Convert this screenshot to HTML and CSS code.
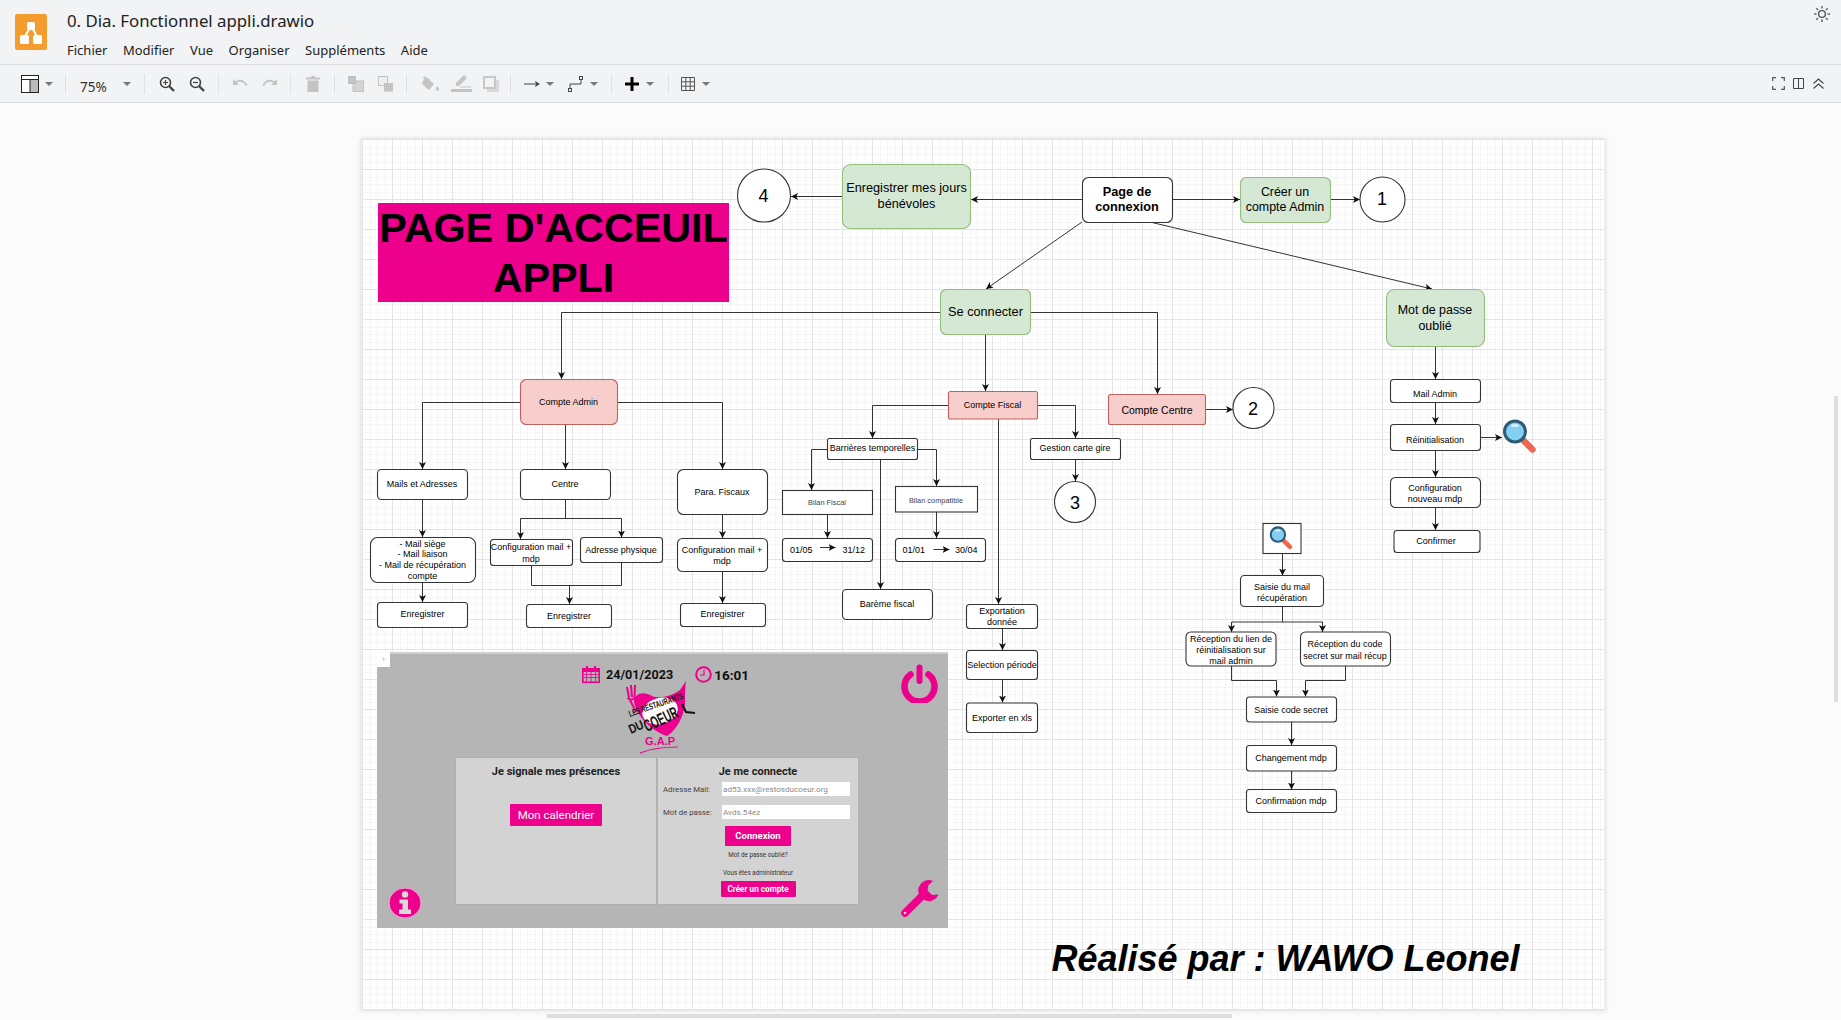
FILE: index.html
```html
<!DOCTYPE html>
<html lang="fr">
<head>
<meta charset="utf-8">
<title>0. Dia. Fonctionnel appli.drawio</title>
<link rel="stylesheet" href="styles.css">
</head>
<body>
<header class="header">
  <svg class="app-logo" viewBox="0 0 32 36"><rect width="32" height="36" rx="2" fill="#f49d2e"/><path d="M16 12 9 24M16 12l7 12" stroke="#fff" stroke-width="2"/><rect x="12" y="8" width="8" height="8" rx="1.5" fill="#fff"/><rect x="5" y="21" width="9" height="9" rx="1.5" fill="#fff"/><rect x="18" y="21" width="9" height="9" rx="1.5" fill="#fff"/></svg>
  <div class="title-block">
    <div class="doc-title">0. Dia. Fonctionnel appli.drawio</div>
    <nav class="menu"><span>Fichier</span><span>Modifier</span><span>Vue</span><span>Organiser</span><span>Suppléments</span><span>Aide</span></nav>
  </div>
  <svg class="sun" viewBox="0 0 18 18"><circle cx="9" cy="9" r="3.4" fill="none" stroke="#555" stroke-width="1.4"/><path d="M9 1v2.4M9 14.6V17M1 9h2.4M14.6 9H17M3.3 3.3 5 5M13 13l1.7 1.7M3.3 14.7 5 13M13 5l1.7-1.7" stroke="#666" stroke-width="1.5"/></svg>
</header>

<div class="toolbar">
  <span class="tool w26"><svg width="18" height="18" viewBox="0 0 18 18"><rect x=".5" y=".5" width="17" height="17" fill="#fff" stroke="#222"/><rect x="9" y="5" width="8" height="12" fill="#bbb"/><path d="M1 4.5h16M9 5v12" stroke="#222" fill="none"/></svg></span>
  <span class="caret"></span>
  <span class="sep ml-10"></span>
  <span class="zoom-val ml-14">75%</span>
  <span class="caret ml-15"></span>
  <span class="sep ml-11"></span>
  <span class="tool w30 ml-7"><svg width="16" height="16" viewBox="0 0 16 16"><circle cx="6.5" cy="6.5" r="5" fill="none" stroke="#444" stroke-width="1.6"/><path d="M10 10l5 5" stroke="#444" stroke-width="2.4"/><path d="M4 6.5h5M6.5 4v5" stroke="#444" stroke-width="1.2"/></svg></span>
  <span class="tool w30"><svg width="16" height="16" viewBox="0 0 16 16"><circle cx="6.5" cy="6.5" r="5" fill="none" stroke="#444" stroke-width="1.6"/><path d="M10 10l5 5" stroke="#444" stroke-width="2.4"/><path d="M4 6.5h5" stroke="#444" stroke-width="1.2"/></svg></span>
  <span class="sep ml-6"></span>
  <span class="tool w30 ml-6"><svg width="16" height="10" viewBox="0 0 16 10"><path d="M1 0v6h6L4.6 3.8C7.500 1.800 11.800 2.500 14 7l1.500-.8C13 .5 7.500-.8 3.300 2.300Z" fill="#c4c4c4"/></svg></span>
  <span class="tool w30"><svg width="16" height="10" viewBox="0 0 16 10"><path d="M15 0v6H9l2.400-2.200C8.500 1.800 4.200 2.500 2 7L.5 6.200C3 .5 8.500-.8 12.700 2.300Z" fill="#c4c4c4"/></svg></span>
  <span class="sep ml-5"></span>
  <span class="tool w30 ml-7"><svg width="14" height="16" viewBox="0 0 14 16"><path d="M0 1.500h14V3.500H0ZM5 0h4v2H5ZM1.500 4.500h11V16h-11Z" fill="#c4c4c4"/></svg></span>
  <span class="sep ml-6"></span>
  <span class="tool w30 ml-6"><svg width="16" height="16" viewBox="0 0 16 16"><rect x="5" y="5" width="10.500" height="10.500" fill="#d4d4d4" stroke="#c4c4c4"/><rect x=".5" y=".5" width="7" height="7" fill="#c4c4c4" stroke="#bbb"/></svg></span>
  <span class="tool w30"><svg width="16" height="16" viewBox="0 0 16 16"><rect x=".5" y=".5" width="9" height="9" fill="#eee" stroke="#c4c4c4"/><rect x="6" y="7" width="9" height="8.500" fill="#c4c4c4"/></svg></span>
  <span class="sep ml-5"></span>
  <span class="tool w30 ml-9"><svg width="18" height="16" viewBox="0 0 18 16"><path d="M3 0 12 8 7 14 0 8Z M2 7h10" fill="#c4c4c4"/><path d="M1 1l7 3" stroke="#c4c4c4" fill="none"/><path d="M15.500 10c1.500 2 2 3 1.500 4-.6 1-2.400 1-3 0-.5-1 0-2 1.500-4Z" fill="#c4c4c4"/></svg></span>
  <span class="tool w30"><svg width="21" height="17" viewBox="0 0 21 17"><path d="M13 0l3 3-8 8H5V8Z" fill="#c4c4c4"/><rect y="14" width="21" height="3" fill="#c4c4c4"/><path d="M9 12h11" stroke="#c4c4c4"/></svg></span>
  <span class="tool w30"><svg width="16" height="16" viewBox="0 0 16 16"><rect x="4" y="4" width="12" height="12" fill="#dadada"/><rect x="1" y="1" width="11" height="11" fill="#f1f3f4" stroke="#c4c4c4" stroke-width="1.800"/></svg></span>
  <span class="sep ml-4"></span>
  <span class="tool w24 ml-9"><svg width="16" height="8" viewBox="0 0 16 8"><path d="M0 4h13" stroke="#444"/><path d="M11 1l5 3-5 3 1-3Z" fill="#444"/></svg></span>
  <span class="caret"></span>
  <span class="tool w24 ml-8"><svg width="16" height="16" viewBox="0 0 16 16"><path d="M2 13V8h11V3" fill="none" stroke="#444"/><rect x=".5" y="12.500" width="3" height="3" fill="#f1f3f4" stroke="#444"/><rect x="11.500" y=".5" width="3" height="3" fill="#f1f3f4" stroke="#444"/></svg></span>
  <span class="caret"></span>
  <span class="sep ml-11"></span>
  <span class="tool w24 ml-8"><svg width="14" height="14" viewBox="0 0 14 14"><path d="M5.500 0h3v5.500H14v3H8.500V14h-3V8.500H0v-3h5.500Z" fill="#000"/></svg></span>
  <span class="caret"></span>
  <span class="sep ml-12"></span>
  <span class="tool w24 ml-7"><svg width="14" height="14" viewBox="0 0 14 14"><path d="M.5.500h13v13H.500ZM.500 4.800h13M.500 9.200h13M4.800.5v13M9.200.5v13" fill="none" stroke="#555"/></svg></span>
  <span class="caret"></span>
  <span class="tb-right">
    <span class="tool w20"><svg width="13" height="13" viewBox="0 0 13 13"><path d="M.7 4V.7H4M9 .7h3.300V4M12.300 9v3.300H9M4 12.300H.7V9" fill="none" stroke="#555" stroke-width="1.200"/></svg></span>
    <span class="tool w20"><svg width="11" height="11" viewBox="0 0 11 11"><path d="M.5.500h10v10H.500ZM5.500.5v10" fill="none" stroke="#444"/></svg></span>
    <span class="tool w20"><svg width="11" height="11" viewBox="0 0 11 11"><path d="M.5 5.500 5.500 1l5 4.500M.5 10.500l5-4.500 5 4.500" fill="none" stroke="#444" stroke-width="1.100"/></svg></span>
  </span>
</div>

<main class="canvas">
  <svg class="diagram" viewBox="0 103 1841 917" width="1841" height="917">
    <defs>
      <pattern id="grid" x="362" y="139" width="30" height="30" patternUnits="userSpaceOnUse">
        <path class="minor" d="M8 0v30M15 0v30M23 0v30M0 8h30M0 15h30M0 23h30"/>
        <path class="major" d="M.5 0v30M0 .5h30"/>
      </pattern>
      <marker id="a" markerUnits="userSpaceOnUse" markerWidth="8" markerHeight="8" refX="7" refY="4" orient="auto">
        <path d="M0 .5 7 4 0 7.500 1.700 4Z" fill="#111"/>
      </marker>
      <symbol id="mag" viewBox="0 0 35 35">
        <path d="M21 21 30.500 30.500" stroke="#f0674f" stroke-width="6.500" stroke-linecap="round"/>
        <circle cx="13" cy="12.500" r="10.500" fill="#83d0f2" stroke="#2e5a75" stroke-width="3"/>
        <ellipse cx="13" cy="6.500" rx="4" ry="1.500" fill="#d6f1fb"/>
      </symbol>
    </defs>

    <rect class="paper" x="361" y="139" width="1244" height="871"/>
    <rect x="362" y="139" width="1242" height="871" fill="url(#grid)"/>

    <rect class="banner" x="378" y="203" width="351" height="99"/>
    <text class="t-banner" x="553.500" y="242">PAGE D'ACCEUIL</text>
    <text class="t-banner" x="553.500" y="292">APPLI</text>

    <g class="edges" marker-end="url(#a)">
      <path d="M1082 199.500H971"/>
      <path d="M842 196.500H791"/>
      <path d="M1173 199.500H1240"/>
      <path d="M1330 199.500H1360"/>
      <path d="M1082 222 986 289"/>
      <path d="M1150 222 1432 289"/>
      <path d="M940 312.500H561.500V379"/>
      <path d="M985.500 335V391"/>
      <path d="M1030 312.500H1157.500V394"/>
      <path d="M1206 409.500H1233"/>
      <path d="M520 402.500H422.500V469"/>
      <path d="M618 402.500H722.500V469"/>
      <path d="M565.500 425V469"/>
      <path d="M948 405.500H872.500V438"/>
      <path d="M1038 405.500H1075.500V438"/>
      <path d="M1075.500 459V481"/>
      <path d="M827 449.500H811.500V490"/>
      <path d="M918 449.500H936.500V486"/>
      <path d="M880.500 459V589"/>
      <path d="M998.500 419V604"/>
      <path d="M827.500 515V538"/>
      <path d="M936.500 512V538"/>
      <path d="M422.500 500V537"/>
      <path d="M422.500 582V602"/>
      <path d="M565.500 500V518.500H520.500V539"/>
      <path d="M565.500 518.500H621.500V537.500"/>
      <path d="M569.500 585V604"/>
      <path d="M722.500 515V538"/>
      <path d="M722.500 571V603"/>
      <path d="M1002.500 628V650"/>
      <path d="M1002.500 680V702.500"/>
      <path d="M1435.500 347V379"/>
      <path d="M1435.500 403V424"/>
      <path d="M1435.500 450V477"/>
      <path d="M1435.500 507V530"/>
      <path d="M1480 437.500H1502"/>
      <path d="M1282.500 553V575.500"/>
      <path d="M1282.500 622H1231.500V632"/>
      <path d="M1282.500 622H1322.500V632"/>
      <path d="M1231.500 666V680.500H1276.500V696.500"/>
      <path d="M1345.500 666V680.500H1305.500V696.500"/>
      <path d="M1291.500 722V745"/>
      <path d="M1291.500 771V789.500"/>
    </g>
    <path class="line" d="M531.500 566V585.500H621.500V562M1282.500 607V622"/>

    <rect class="green" x="842.500" y="164.500" width="128" height="64" rx="8"/>
    <text class="t13" x="906.500" y="192">Enregistrer mes jours</text>
    <text class="t13" x="906.500" y="208">bénévoles</text>

    <ellipse class="box" cx="764" cy="195.500" rx="26.500" ry="26.500"/>
    <text class="t18" x="763.500" y="202">4</text>

    <rect class="box" x="1082.500" y="177.500" width="90" height="45" rx="6"/>
    <text class="t13 bold" x="1127" y="196">Page de</text>
    <text class="t13 bold" x="1127" y="211">connexion</text>

    <rect class="green" x="1240.500" y="177.500" width="90" height="45" rx="6"/>
    <text class="t12-5" x="1285" y="196">Créer un</text>
    <text class="t12-5" x="1285" y="211">compte Admin</text>

    <ellipse class="box" cx="1382.500" cy="199.500" rx="22.500" ry="22.500"/>
    <text class="t18" x="1382" y="205">1</text>

    <rect class="green" x="940.500" y="289.500" width="90" height="45" rx="6"/>
    <text class="t13" x="985.500" y="316">Se connecter</text>

    <rect class="green" x="1386.500" y="289.500" width="98" height="57" rx="8"/>
    <text class="t12-5" x="1435" y="314">Mot de passe</text>
    <text class="t12-5" x="1435" y="330">oublié</text>

    <rect class="red" x="520.500" y="379.500" width="97" height="45" rx="6"/>
    <text class="t9" x="568.500" y="405">Compte Admin</text>

    <rect class="red" x="948.500" y="391.500" width="89" height="27.500" rx="2"/>
    <text class="t9" x="992.500" y="408">Compte Fiscal</text>

    <rect class="red" x="1108.500" y="394.500" width="97" height="30" rx="2"/>
    <text class="t10-5" x="1157" y="413.500">Compte Centre</text>

    <ellipse class="box" cx="1253.500" cy="408" rx="20.500" ry="20.500"/>
    <text class="t18" x="1253" y="414.500">2</text>

    <rect class="box" x="827.500" y="438.500" width="90" height="21" rx="2"/>
    <text class="t9" x="872.500" y="451">Barrières temporelles</text>

    <rect class="box" x="1030.500" y="438.500" width="90" height="21" rx="2"/>
    <text class="t9" x="1075" y="451">Gestion carte gire</text>

    <ellipse class="box" cx="1075" cy="502" rx="20.500" ry="20.500"/>
    <text class="t18" x="1075" y="508.500">3</text>

    <rect class="box" x="1390.500" y="379.500" width="90" height="23" rx="3"/>
    <text class="t9" x="1435" y="397">Mail Admin</text>

    <rect class="box" x="1390.500" y="424.500" width="90" height="26" rx="3"/>
    <text class="t9" x="1435" y="443">Réinitialisation</text>
    <use href="#mag" x="1502" y="419" width="35" height="35"/>

    <rect class="box" x="1390.500" y="477.500" width="90" height="30" rx="5"/>
    <text class="t9" x="1435" y="490.500">Configuration</text>
    <text class="t9" x="1435" y="501.500">nouveau mdp</text>

    <rect class="box" x="1394" y="530.500" width="86" height="22" rx="3"/>
    <text class="t9" x="1436" y="544">Confirmer</text>

    <rect class="box" x="1263" y="523.500" width="38" height="30"/>
    <use href="#mag" x="1269" y="526" width="24" height="24"/>

    <rect class="box" x="1240.500" y="575.500" width="83" height="31" rx="4"/>
    <text class="t9" x="1282" y="589.500">Saisie du mail</text>
    <text class="t9" x="1282" y="600.500">récupération</text>

    <rect class="box" x="1186" y="632" width="90" height="34" rx="5"/>
    <text class="t9" x="1231" y="641.500">Réception du lien de</text>
    <text class="t9" x="1231" y="652.500">réinitialisation sur</text>
    <text class="t9" x="1231" y="663.500">mail admin</text>

    <rect class="box" x="1300.500" y="632" width="90" height="34" rx="5"/>
    <text class="t9" x="1345" y="646.500">Réception du code</text>
    <text class="t9" x="1345" y="658.500">secret sur mail récup</text>

    <rect class="box" x="1246.500" y="697" width="90" height="25" rx="3"/>
    <text class="t9" x="1291" y="712.500">Saisie code secret</text>

    <rect class="box" x="1246.500" y="745.500" width="90" height="25.500" rx="3"/>
    <text class="t9" x="1291" y="760.500">Changement mdp</text>

    <rect class="box" x="1246.500" y="789.500" width="90" height="23" rx="3"/>
    <text class="t9" x="1291" y="803.500">Confirmation mdp</text>

    <rect class="box" x="377.500" y="469.500" width="90" height="30" rx="4"/>
    <text class="t9" x="422" y="487">Mails et Adresses</text>

    <rect class="box" x="370.500" y="537.500" width="105" height="45" rx="7"/>
    <text class="t9" x="422.500" y="547">- Mail siège</text>
    <text class="t9" x="422.500" y="557">- Mail liaison</text>
    <text class="t9" x="422.500" y="568">- Mail de récupération</text>
    <text class="t9" x="422.500" y="579">compte</text>

    <rect class="box" x="377.500" y="602.500" width="90" height="25" rx="3"/>
    <text class="t9" x="422.500" y="617">Enregistrer</text>

    <rect class="box" x="520.500" y="469.500" width="90" height="30" rx="4"/>
    <text class="t9" x="565" y="487">Centre</text>

    <rect class="box" x="490.500" y="539.500" width="82" height="26" rx="3"/>
    <text class="t9" x="531" y="550">Configuration mail +</text>
    <text class="t9" x="531" y="562">mdp</text>

    <rect class="box" x="580.500" y="537.500" width="82" height="25" rx="3"/>
    <text class="t9" x="621" y="553">Adresse physique</text>

    <rect class="box" x="526.500" y="604.500" width="85" height="23" rx="3"/>
    <text class="t9" x="569" y="619">Enregistrer</text>

    <rect class="box" x="677.500" y="469.500" width="90" height="45" rx="6"/>
    <text class="t9" x="722" y="495">Para. Fiscaux</text>

    <rect class="box" x="677.500" y="538.500" width="90" height="33" rx="5"/>
    <text class="t9" x="722" y="553">Configuration mail +</text>
    <text class="t9" x="722" y="564">mdp</text>

    <rect class="box" x="680.500" y="603.500" width="85" height="23" rx="3"/>
    <text class="t9" x="722.500" y="617">Enregistrer</text>

    <rect class="box" x="782.500" y="490.500" width="90" height="24"/>
    <text class="t7 grey" x="827" y="505">Bilan Fiscal</text>

    <rect class="box" x="895.500" y="486.500" width="82" height="25.500"/>
    <text class="t7 grey" x="936" y="502.500">Bilan compatible</text>

    <rect class="box" x="782.500" y="538.500" width="90" height="23" rx="3"/>
    <text class="t9 left" x="790" y="553">01/05</text>
    <text class="t9 left" x="842.500" y="553">31/12</text>

    <rect class="box" x="895.500" y="538.500" width="90" height="23" rx="3"/>
    <text class="t9 left" x="902.500" y="553">01/01</text>
    <text class="t9 left" x="955" y="553">30/04</text>

    <g class="edges" marker-end="url(#a)">
      <path d="M820 547.500H835.500"/>
      <path d="M933.500 549.500H949.500"/>
    </g>

    <rect class="box" x="842.500" y="589.500" width="90" height="30" rx="4"/>
    <text class="t9" x="887" y="607">Barème fiscal</text>

    <rect class="box" x="966.500" y="604.500" width="71" height="24" rx="3"/>
    <text class="t9" x="1002" y="614">Exportation</text>
    <text class="t9" x="1002" y="625">donnée</text>

    <rect class="box" x="966.500" y="650.500" width="71" height="29" rx="3"/>
    <text class="t9" x="1002" y="668">Selection période</text>

    <rect class="box" x="966.500" y="703" width="71" height="29.500" rx="3"/>
    <text class="t9" x="1002" y="721">Exporter en xls</text>

    <text class="t-credit" x="1051.500" y="971">Réalisé par : WAWO Leonel</text>
  </svg>

  <section class="shot">
    <span class="shot-handle">›</span>
    <div class="shot-head">
      <svg width="18" height="17" viewBox="0 0 18 17"><rect x=".8" y="2.800" width="16.400" height="13.400" fill="none" stroke="#ec008c" stroke-width="1.600"/><path d="M1 8.500h16M1 11.500h16M4.500 6v10M9 6v10M13.500 6v10" stroke="#ec008c" stroke-width=".8"/><path d="M1 3h16v3H1ZM4 0h2v4H4ZM12 0h2v4h-2Z" fill="#ec008c"/></svg>
      <span class="shot-date">24/01/2023</span>
      <svg class="shot-clock" width="17" height="17" viewBox="0 0 17 17"><circle cx="8.500" cy="8.500" r="7.300" fill="none" stroke="#ec008c" stroke-width="2"/><path d="M9 4v5H5" fill="none" stroke="#ec008c" stroke-width="1.200"/></svg>
      <span class="shot-time">16:01</span>
    </div>
    <svg class="shot-logo" width="75" height="73" viewBox="5 3 75 73">
      <path d="M14 22C14 13 24 11 32 16 40 19 52 16 60 10L66 1C65 8 65 14 65 22 65 34 57 50 47 56 35 52 18 40 14 22Z" fill="#ec008c"/>
      <ellipse cx="40" cy="31" rx="18" ry="13" transform="rotate(-15 40 31)" fill="#fff"/>
      <path d="M7 7 9 18 16 32M11 5l1 12M15 5 14.500 18M7.500 18C10 20 13 20 14.500 18" fill="none" stroke="#ec008c" stroke-width="2"/>
      <text class="logo-a" transform="translate(10 37) rotate(-19)" textLength="57" lengthAdjust="spacingAndGlyphs">LES RESTAURANTS</text>
      <text class="logo-b" transform="translate(11 54) rotate(-24)" textLength="15" lengthAdjust="spacingAndGlyphs">DU</text>
      <text class="logo-d" transform="translate(27 52) rotate(-25)" textLength="36" lengthAdjust="spacingAndGlyphs">COEUR</text>
      <path d="M62 24 66 32 75 33" fill="none" stroke="#111" stroke-width="2"/>
      <text class="logo-c" x="25" y="65" textLength="30" lengthAdjust="spacingAndGlyphs">G.A.P</text>
      <path d="M20 73Q35 67 58 67" fill="none" stroke="#ec008c" stroke-width="1.200"/>
    </svg>
    <div class="shot-panels">
      <div class="panel">
        <h2 class="panel-title">Je signale mes présences</h2>
        <span class="btn btn-cal">Mon calendrier</span>
      </div>
      <div class="panel">
        <h2 class="panel-title">Je me connecte</h2>
        <div class="field"><label>Adresse Mail:</label><span class="input">ad53.xxx@restosducoeur.org</span></div>
        <div class="field field-2"><label>Mot de passe:</label><span class="input">Avds.54ez</span></div>
        <span class="btn btn-login">Connexion</span>
        <span class="fine fine-1">Mot de passe oublié?</span>
        <span class="fine fine-2">Vous êtes administrateur</span>
        <span class="btn btn-create">Créer un compte</span>
      </div>
    </div>
    <svg class="ico-power" width="39" height="39" viewBox="0 0 39 39"><path d="M10.500 10.500A15 15 0 1 0 28.500 10.500" fill="none" stroke="#ec008c" stroke-width="6.500" stroke-linecap="round"/><path d="M19.500 3.500V17" stroke="#ec008c" stroke-width="6" stroke-linecap="round"/></svg>
    <svg class="ico-info" width="34" height="32" viewBox="0 0 34 32"><ellipse cx="17" cy="16" rx="16" ry="15" fill="#ec008c" stroke="#f4a5d0"/><circle cx="17" cy="7.500" r="3.200" fill="#d9d9d9"/><path d="M11.500 12.500h8.500v10h3v4.500H11V22.500h3.500V16.500h-3Z" fill="#d9d9d9"/></svg>
    <svg class="ico-wrench" width="39" height="38" viewBox="0 0 39 38"><path d="M5 33 24 14" stroke="#ec008c" stroke-width="7.500" stroke-linecap="round"/><path d="M33 1A10.500 10.500 0 1 0 38.500 14.500L32 15 27.500 10.500 28.500 5Z" fill="#ec008c"/><circle cx="5" cy="33" r="1.300" fill="#d9d9d9"/></svg>
  </section>
</main>
<div class="scroll-h"></div>
<div class="scroll-v"></div>
</body>
</html>
```
FILE: styles.css
```css
* { box-sizing: border-box; }
html, body { margin: 0; height: 100%; overflow: hidden; }
body {
  width: 1841px;
  height: 1020px;
  display: flex;
  flex-direction: column;
  position: relative;
  background: #fbfbfb;
  font-family: "Noto Sans", "Liberation Sans", sans-serif;
  color: #111;
}

/* header */
.header {
  height: 65px;
  flex: none;
  display: flex;
  align-items: flex-start;
  background: #f1f3f4;
  border-bottom: 1px solid #dadce0;
  padding: 14px 0 0 15px;
}
.app-logo { width: 32px; height: 36px; flex: none; }
.title-block { margin-left: 20px; margin-top: -4px; }
.doc-title { font-size: 16.800px; line-height: 22px; color: #222; }
.menu { display: flex; gap: 15.500px; margin-top: 9px; font-size: 13px; line-height: 18px; color: #222; }
.sun { width: 18px; height: 18px; margin-left: auto; margin-top: -9px; margin-right: 10px; }

/* toolbar */
.toolbar {
  height: 38px;
  flex: none;
  display: flex;
  align-items: center;
  padding: 0 13px 0 17px;
  background: #f1f3f4;
  border-bottom: 1px solid #dadce0;
}
.tool { display: flex; justify-content: center; align-items: center; height: 20px; flex: none; }
.w20 { width: 20px; }
.w24 { width: 24px; }
.w26 { width: 26px; }
.w30 { width: 30px; }
.caret { width: 12px; height: 20px; flex: none; position: relative; }
.caret::after {
  content: "";
  position: absolute;
  left: 2px;
  top: 8px;
  border-left: 4px solid transparent;
  border-right: 4px solid transparent;
  border-top: 4px solid #777;
}
.sep { width: 1px; height: 20px; background: #e0e2e5; flex: none; }
.zoom-val { width: 26px; font-size: 13.500px; color: #333; margin-top: 6px; flex: none; }
.tb-right { display: flex; margin-left: auto; }
.ml-4 { margin-left: 4px; }
.ml-5 { margin-left: 5px; }
.ml-6 { margin-left: 6px; }
.ml-7 { margin-left: 7px; }
.ml-8 { margin-left: 8px; }
.ml-9 { margin-left: 9px; }
.ml-10 { margin-left: 10px; }
.ml-11 { margin-left: 11px; }
.ml-12 { margin-left: 12px; }
.ml-14 { margin-left: 14px; }
.ml-15 { margin-left: 15px; }

/* diagram canvas */
.canvas { position: relative; flex: 1; overflow: hidden; background: #fbfbfb; }
.diagram { position: absolute; left: 0; top: 0; display: block; }
.paper { fill: #fff; stroke: #e6e6e6; stroke-width: 1; filter: drop-shadow(0 0 2px rgba(0, 0, 0, .12)); }
.minor { stroke: #f5f5f5; stroke-width: 1; fill: none; shape-rendering: crispEdges; }
.major { stroke: #e4e4e4; stroke-width: 1; fill: none; shape-rendering: crispEdges; }
.banner { fill: #ec008c; }
.edges path, .line { fill: none; stroke: #333; stroke-width: 1; }
.box { fill: #fff; stroke: #333; stroke-width: 1.100; }
.green { fill: #d5e8d4; stroke: #93bd7a; stroke-width: 1.100; }
.red { fill: #f8cecc; stroke: #c0625e; stroke-width: 1.100; }

text { font-family: "Liberation Sans", Arial, sans-serif; text-anchor: middle; fill: #000; }
.t7 { font-size: 7.400px; }
.t9 { font-size: 9px; }
.t10-5 { font-size: 10.500px; }
.t12-5 { font-size: 12.400px; }
.t13 { font-size: 12.700px; }
.t18 { font-size: 18px; }
.bold { font-weight: 700; }
.left { text-anchor: start; }
.grey { fill: #444; }
.t-banner { font-size: 41.300px; font-weight: 700; }
.t-credit { font-size: 36px; font-weight: 700; font-style: italic; text-anchor: start; }

/* embedded application screenshot */
.shot {
  position: absolute;
  left: 377px;
  top: 549px;
  width: 571px;
  height: 276px;
  background: #b5b5b5;
  border-top: 2px solid #cfcfcf;
  font-family: Roboto, "Liberation Sans", sans-serif;
}
.shot-handle {
  position: absolute;
  left: 0;
  top: -2px;
  width: 13px;
  height: 15px;
  background: #fff;
  color: #999;
  font-size: 9px;
  line-height: 14px;
  text-align: center;
}
.shot-head { display: flex; align-items: center; padding: 12px 0 0 205px; height: 29px; }
.shot-date { font-size: 12.600px; font-weight: 700; margin-left: 6px; color: #111; position: relative; top: -.5px; }
.shot-clock { margin-left: 22px; }
.shot-time { font-size: 13.500px; font-weight: 700; margin-left: 2px; color: #111; }
.shot-logo { display: block; margin: 0 auto 0 248px; overflow: visible; }
.shot-panels {
  display: grid;
  grid-template-columns: 200px 200px;
  gap: 2px;
  margin: 2px 0 0 79px;
  height: 146px;
}
.panel {
  background: #d3d3d3;
  display: flex;
  flex-direction: column;
  align-items: center;
  box-shadow: 0 0 1px #999;
  position: relative;
}
.panel-title { margin: 7px 0 0; font-size: 11px; line-height: 13px; font-weight: 700; color: #222; }
.btn { display: block; background: #ec008c; color: #fff; text-align: center; border-radius: 1px; }
.btn-cal { margin-top: 26px; width: 92px; height: 22px; font-size: 11.500px; line-height: 22px; }
.field { display: flex; align-items: center; align-self: stretch; padding-left: 5px; font-size: 7.800px; color: #444; margin-top: 4px; }
.field label { width: 59px; flex: none; }
.field-2 { margin-top: 9px; }
.input { background: #fff; width: 128px; height: 14px; line-height: 14px; padding-left: 1px; color: #8a8a8a; font-size: 8.100px; }
.btn-login { margin-top: 7px; width: 66px; height: 20px; font-size: 9.500px; font-weight: 700; line-height: 20px; }
.fine { font-size: 6.300px; color: #333; line-height: 8px; }
.fine-1 { margin-top: 5px; }
.fine-2 { margin-top: 10px; }
.btn-create { margin-top: 4px; width: 75px; height: 16px; font-size: 8.200px; font-weight: 700; line-height: 16px; }
.ico-power { position: absolute; left: 523px; top: 10px; }
.ico-info { position: absolute; left: 11px; top: 233px; }
.ico-wrench { position: absolute; left: 523px; top: 226px; }
.logo-a { font-size: 9px; font-weight: 700; text-anchor: start; fill: #111; }
.logo-b { font-size: 13px; font-weight: 700; text-anchor: start; fill: #111; }
.logo-d { font-size: 17px; font-weight: 700; text-anchor: start; fill: #111; }
.logo-c { font-size: 11px; font-weight: 700; text-anchor: start; fill: #ec008c; }

/* scrollbars lie over the canvas */
.scroll-h { position: absolute; left: 547px; top: 1014px; width: 685px; height: 4px; background: #dedede; }
.scroll-v { position: absolute; left: 1834px; top: 396px; width: 4px; height: 306px; background: #dedede; }
```
